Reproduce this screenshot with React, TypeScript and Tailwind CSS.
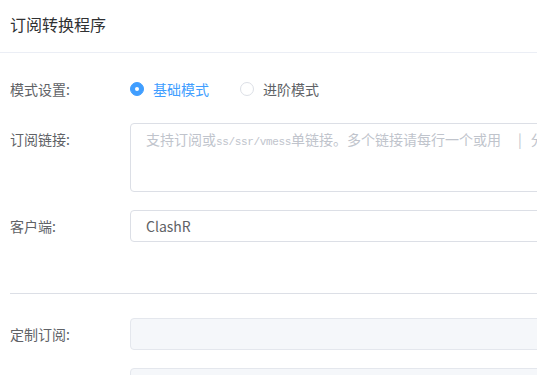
import React from "react";

const font = { fontFamily: '"Noto Sans CJK SC", "Noto Sans", sans-serif' };

function Label({ children }: { children?: React.ReactNode }) {
  return (
    <div className="w-[130px] shrink-0 pl-[10px] text-[14px] leading-[32px] text-[#606266]">
      {children}
    </div>
  );
}

function Radio({ checked, label }: { checked?: boolean; label: string }) {
  return (
    <div className="flex items-center">
      {checked ? (
        <span className="flex h-[14px] w-[14px] items-center justify-center rounded-full border border-[#409eff] bg-[#409eff]">
          <span className="h-[4px] w-[4px] rounded-full bg-white" />
        </span>
      ) : (
        <span className="h-[14px] w-[14px] rounded-full border border-[#dcdfe6] bg-white" />
      )}
      <span
        className={`ml-[9px] text-[14px] leading-[32px] ${checked ? "text-[#409eff]" : "text-[#606266]"}`}
      >
        {label}
      </span>
    </div>
  );
}

export default function App() {
  const mono = { fontFamily: '"Liberation Mono", monospace' };
  return (
    <div className="h-[375px] w-[537px] overflow-hidden bg-white" style={font}>
      <div className="w-[900px]">
        <div className="flex h-[53px] items-center border-b border-[#ebeef5] pl-[10px] pb-[5px]">
          <span className="text-[16px] text-[#303133]">订阅转换程序</span>
        </div>

        <div className="pt-[20px]">
          <div className="flex">
            <Label>模式设置:</Label>
            <div className="flex items-center gap-[31px]">
              <Radio checked label="基础模式" />
              <Radio label="进阶模式" />
            </div>
          </div>

          <div className="mt-[18px] flex">
            <Label>订阅链接:</Label>
            <div className="h-[69px] w-[700px] rounded-[4px] border border-[#dcdfe6] px-[15px] pt-[4px] text-[14px] leading-[22px] text-[#c0c4cc] whitespace-nowrap">
              <span>支持订阅或</span>
              <span className="text-[11px] tracking-[-0.35px]" style={mono}>ss/ssr/vmess</span>
              <span>单链接。多个链接请每行一个或用</span>
              <span className="ml-[17px] text-[#c0c4cc]">|</span>
              <span className="ml-[9px]">分隔</span>
            </div>
          </div>

          <div className="mt-[18px] flex">
            <Label>客户端:</Label>
            <div className="flex h-[32px] w-[700px] items-center rounded-[4px] border border-[#dcdfe6] px-[15px] text-[14px] text-[#606266]">
              ClashR
            </div>
          </div>

          <div className="ml-[10px] mt-[51px] h-px bg-[#dcdfe6]" />

          <div className="mt-[24px] flex">
            <Label>定制订阅:</Label>
            <div className="h-[32px] w-[700px] rounded-[4px] border border-[#e4e7ed] bg-[#f5f7fa]" />
          </div>

          <div className="mt-[18px] flex">
            <Label />
            <div className="h-[32px] w-[700px] rounded-[4px] border border-[#e4e7ed] bg-[#f5f7fa]" />
          </div>
        </div>
      </div>
    </div>
  );
}
